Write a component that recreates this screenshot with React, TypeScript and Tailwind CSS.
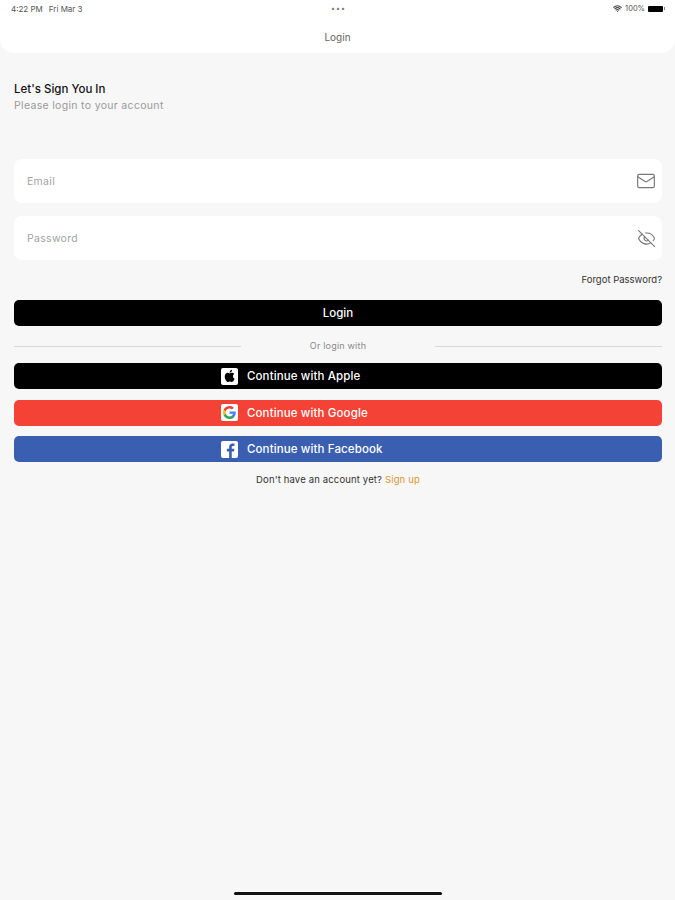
import { Mail, EyeOff, Wifi } from "lucide-react";
import type { ReactNode } from "react";

const font = "font-['Inter','Noto_Sans',sans-serif]";

function AppleIcon() {
  return (
    <span className="flex h-[17px] w-[17px] items-center justify-center rounded-[2px] bg-white">
      <svg viewBox="0 0 24 24" className="h-[14px] w-[14px]" fill="#000">
        <path d="M17.05 12.54c-.03-2.6 2.13-3.85 2.23-3.91-1.21-1.78-3.1-2.02-3.78-2.05-1.61-.16-3.14.95-3.96.95-.81 0-2.08-.93-3.42-.9-1.76.03-3.38 1.02-4.29 2.6-1.83 3.17-.47 7.87 1.31 10.44.87 1.26 1.91 2.67 3.27 2.62 1.31-.05 1.81-.85 3.39-.85 1.58 0 2.03.85 3.42.82 1.41-.02 2.31-1.28 3.17-2.55 1-1.46 1.41-2.88 1.44-2.95-.03-.01-2.76-1.06-2.78-4.22zM14.44 4.77c.72-.88 1.21-2.09 1.08-3.3-1.04.04-2.3.69-3.05 1.57-.67.77-1.25 2.01-1.1 3.2 1.16.09 2.35-.59 3.07-1.47z" />
      </svg>
    </span>
  );
}

function GoogleIcon() {
  return (
    <span className="flex h-[17px] w-[17px] items-center justify-center rounded-[2px] bg-white">
      <svg viewBox="0 0 24 24" className="h-[13px] w-[13px]">
        <path fill="#4285F4" d="M23.5 12.3c0-.8-.1-1.6-.2-2.3H12v4.4h6.5c-.3 1.5-1.1 2.7-2.4 3.6v3h3.9c2.2-2.1 3.5-5.1 3.5-8.7z" />
        <path fill="#34A853" d="M12 24c3.2 0 6-1.1 8-2.9l-3.9-3c-1.1.7-2.5 1.2-4.1 1.2-3.1 0-5.8-2.1-6.7-5H1.3v3.1C3.3 21.3 7.3 24 12 24z" />
        <path fill="#FBBC05" d="M5.3 14.3c-.2-.7-.4-1.5-.4-2.3s.1-1.6.4-2.3V6.6h-4C.5 8.2 0 10 0 12s.5 3.8 1.3 5.4l4-3.1z" />
        <path fill="#EA4335" d="M12 4.8c1.8 0 3.3.6 4.6 1.8l3.4-3.4C18 1.2 15.2 0 12 0 7.3 0 3.3 2.7 1.3 6.6l4 3.1c.9-2.8 3.6-4.9 6.7-4.9z" />
      </svg>
    </span>
  );
}

function FacebookIcon() {
  return (
    <span className="flex h-[17px] w-[17px] items-end justify-center overflow-hidden rounded-[2px] bg-white">
      <svg viewBox="0 0 24 24" className="h-[15px] w-[15px] translate-x-[1px]" fill="#3b5fb0">
        <path d="M14 24V13.5h3.6l.6-4.2H14V6.7c0-1.2.4-2 2.1-2h2.2V.9C17.9.9 16.600.7 15.200.7 12 .7 9.800 2.700 9.800 6.200v3.100H6.200v4.200h3.600V24z" />
      </svg>
    </span>
  );
}

function SocialButton({ icon, label, className }: { icon: ReactNode; label: string; className: string }) {
  return (
    <button
      type="button"
      className={`flex h-[26px] w-full items-center gap-[9px] rounded-[5px] pl-[207px] text-[11.500px] font-medium tracking-[0.12px] text-white ${className}`}
    >
      {icon}
      <span className="pt-[2px]">{label}</span>
    </button>
  );
}

function Field({ label, icon }: { label: string; icon: ReactNode }) {
  return (
    <div className="flex h-11 items-center justify-between rounded-lg bg-white pl-[13px] pr-[6px]">
      <span className="pt-[2px] text-[10.500px] tracking-[0.3px] text-[#a3a3a3]">{label}</span>
      {icon}
    </div>
  );
}

export default function App() {
  return (
    <div className={`flex h-[900px] w-full flex-col overflow-hidden bg-[#f7f7f7] ${font}`}>
      <header className="h-[53px] shrink-0 rounded-b-[14px] bg-white">
        <div className="grid h-4 grid-cols-3 items-center pl-[11px] pr-[10px] pt-[1px] text-[7.500px] text-[#555]">
          <div className="flex gap-[6px] text-[8px]">
            <span>4:22 PM</span>
            <span>Fri Mar 3</span>
          </div>
          <span className="pl-[1px] text-center text-[7px] leading-none tracking-[1px] text-[#777]">•••</span>
          <div className="flex items-center justify-end gap-[3px]">
            <Wifi size={9} strokeWidth={3} className="text-[#444]" />
            <span>100%</span>
            <span className="flex items-center">
              <span className="block h-[6px] w-[15px] rounded-[1px] bg-black" />
              <span className="ml-[1px] block h-[3px] w-[1px] bg-[#888]" />
            </span>
          </div>
        </div>
        <div className="pt-[14px] text-center text-[10px] leading-[15px] text-[#666]">Login</div>
      </header>

      <main className="flex flex-col pl-[14px] pr-[13px]">
        <h1 className="mt-[28px] text-[11.500px] leading-[16px] font-medium text-[#111]">Let's Sign You In</h1>
        <p className="mt-[1px] text-[10.500px] leading-[16px] tracking-[0.32px] text-[#9a9a9a]">Please login to your account</p>

        <div className="mt-[45px] flex flex-col gap-[13px]">
          <Field label="Email" icon={<Mail size={20} strokeWidth={1.400} className="text-[#777]" />} />
          <Field label="Password" icon={<EyeOff size={19} strokeWidth={1.400} className="text-[#777]" />} />
        </div>

        <div className="mt-[13px] text-right text-[9.500px] leading-[13px] text-[#333]">Forgot Password?</div>

        <button type="button" className="mt-[14px] h-[26px] w-full rounded-[5px] bg-black pt-[2px] text-[11.500px] font-medium text-white">
          Login
        </button>

        <div className="mt-[13px] flex h-[14px] items-center">
          <span className="h-px w-[227px] bg-[#d8d8d8]" />
          <span className="flex-1 text-center text-[9px] tracking-[0.2px] text-[#8a8a8a]">Or login with</span>
          <span className="h-px w-[227px] bg-[#d8d8d8]" />
        </div>

        <div className="mt-[10px] flex flex-col gap-[10.500px]">
          <SocialButton icon={<AppleIcon />} label="Continue with Apple" className="bg-black" />
          <SocialButton icon={<GoogleIcon />} label="Continue with Google" className="bg-[#f44336]" />
          <SocialButton icon={<FacebookIcon />} label="Continue with Facebook" className="bg-[#3b5fb0]" />
        </div>

        <p className="mt-[11px] text-center text-[9.500px] leading-[14px] tracking-[0.15px] text-[#333]">
          Don't have an account yet? <span className="text-[#d9962e]">Sign up</span>
        </p>
      </main>

      <div className="mt-auto flex justify-center pb-[5px]">
        <span className="h-[3px] w-[208px] rounded-full bg-[#111]" />
      </div>
    </div>
  );
}
